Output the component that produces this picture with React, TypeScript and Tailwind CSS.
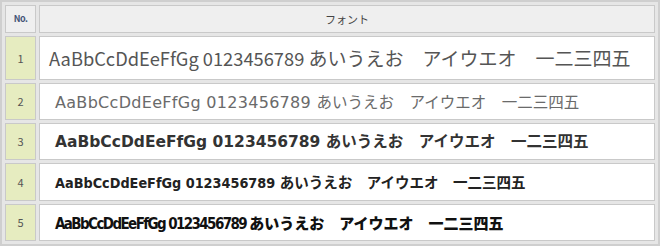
const CJK = '"Noto Sans CJK JP", sans-serif';

const ROWS = [
  { n: 1, h: 'h-[44px]', pad: 'pl-[9px]', color: 'text-[#555]', weight: 'font-normal', latin: '"Noto Sans CJK JP", sans-serif', lsize: 'text-[18.3px]', lspace: 'tracking-normal', csize: 'text-[19px]' },
  { n: 2, h: 'h-[37px]', pad: 'pl-[15px]', color: 'text-[#6a6a6a]', weight: 'font-normal', latin: '"DejaVu Sans", sans-serif', lsize: 'text-[16px]', lspace: 'tracking-[0.3px]', csize: 'text-[15.5px]' },
  { n: 3, h: 'h-[37px]', pad: 'pl-[15px]', color: 'text-[#333]', weight: 'font-bold', latin: '"DejaVu Sans", sans-serif', lsize: 'text-[15.5px]', lspace: 'tracking-normal', csize: 'text-[15.5px]' },
  { n: 4, h: 'h-[38px]', pad: 'pl-[15px]', color: 'text-[#222]', weight: 'font-bold', latin: '"DejaVu Sans Condensed", sans-serif', lsize: 'text-[14.3px]', lspace: 'tracking-normal', csize: 'text-[14.5px]' },
  { n: 5, h: 'h-[37px]', pad: 'pl-[15px]', color: 'text-[#111]', weight: 'font-black', latin: '"DejaVu Sans Condensed", sans-serif', lsize: 'text-[15px]', lspace: 'tracking-[-1.6px]', csize: 'text-[15px]' },
];

export default function App() {
  return (
    <div className="w-[660px] h-[246px] bg-[#e6e6e6] border-2 border-[#cfcfcf] overflow-hidden">
      <table className="table-fixed border-separate border-spacing-[3px] w-full" style={{ fontFamily: CJK }}>
        <colgroup>
          <col className="w-[31px]" />
          <col />
        </colgroup>
        <thead>
          <tr className="h-[28px]">
            <th className="bg-[#efefef] border border-[#c9c9c9] text-[9px] font-bold text-[#445577] tracking-[-0.5px]">No.</th>
            <th className="bg-[#efefef] border border-[#c9c9c9] text-[11px] font-normal text-[#444]">フォント</th>
          </tr>
        </thead>
        <tbody>
          {ROWS.map(r => (
            <tr key={r.n} className={r.h}>
              <td className="bg-[#e6ecc0] border border-[#c9c9c9] text-center text-[11px] text-[#555]">{r.n}</td>
              <td className={`bg-white border border-[#c9c9c9] whitespace-nowrap overflow-hidden ${r.pad} ${r.color} ${r.weight}`}>
                <span className={`${r.lsize} ${r.lspace}`} style={{ fontFamily: r.latin }}>AaBbCcDdEeFfGg 0123456789 </span>
                <span className={r.csize} style={{ fontFamily: CJK }}>あいうえお　アイウエオ　一二三四五</span>
              </td>
            </tr>
          ))}
        </tbody>
      </table>
    </div>
  );
}
